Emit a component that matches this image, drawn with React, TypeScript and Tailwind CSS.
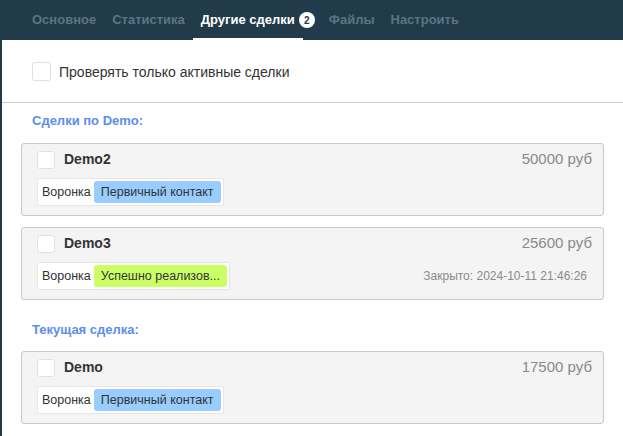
const tabs = ['Основное', 'Статистика', 'Другие сделки', 'Файлы', 'Настроить'];

type Deal = {
  name: string;
  price: string;
  stage: string;
  stageClass: string;
  closed?: string;
};

const otherDeals: Deal[] = [
  { name: 'Demo2', price: '50000 руб', stage: 'Первичный контакт', stageClass: 'bg-[#99ccff]' },
  {
    name: 'Demo3',
    price: '25600 руб',
    stage: 'Успешно реализов...',
    stageClass: 'bg-[#ccff66]',
    closed: 'Закрыто: 2024-10-11 21:46:26',
  },
];

const currentDeal: Deal = { name: 'Demo', price: '17500 руб', stage: 'Первичный контакт', stageClass: 'bg-[#99ccff]' };

function Checkbox() {
  return <span className="block h-[18px] w-[18px] shrink-0 rounded-[3px] border border-[#e2e2e2] bg-white" />;
}

function DealCard({ deal }: { deal: Deal }) {
  return (
    <div className="h-[73px] rounded-[3px] border border-[#c9c9c9] bg-[#f4f4f4] pl-[15px] pr-[10px] pt-[6px]">
      <div className="flex h-[19px] items-center">
        <Checkbox />
        <span className="ml-[9px] text-[14px] font-bold text-[#333]">{deal.name}</span>
        <span className="ml-auto pr-[1px] text-[15px] text-[#8a8a8a]">{deal.price}</span>
      </div>
      <div className="mt-[9px] flex items-center">
        <div className="flex h-[28px] items-center rounded-[2px] border border-[#e6e6e6] bg-white p-[2px] pl-[4px]">
          <span className="text-[12.5px] text-[#333]">Воронка</span>
          <span className={`ml-[3px] flex h-[22px] items-center rounded-[3px] px-[7px] text-[12.5px] text-[#333] ${deal.stageClass}`}>
            {deal.stage}
          </span>
        </div>
        {deal.closed && <span className="ml-auto pr-[6px] text-[12px] text-[#8a8a8a]">{deal.closed}</span>}
      </div>
    </div>
  );
}

export default function App() {
  return (
    <div
      className="h-[436px] w-[623px] overflow-hidden border-l-2 border-[#223b4a] bg-white"
      style={{ fontFamily: '"Liberation Sans", Arial, sans-serif' }}
    >
      <div className="flex h-[40px] items-stretch bg-[#223b4a] pl-[22px]">
        {tabs.map((t) => {
          const active = t === 'Другие сделки';
          return (
            <div key={t} className="flex items-center">
              <div
                className={`flex h-full items-center border-b-2 px-[8px] pt-[1px] text-[13px] font-bold ${
                  active ? 'border-white text-white' : 'border-transparent text-[#5b7585]'
                }`}
              >
                {t}
              </div>
              {active && (
                <span className="ml-[-4px] mr-[6px] flex h-[16px] w-[16px] items-center justify-center rounded-full bg-white text-[10px] font-bold text-[#223b4a]">
                  2
                </span>
              )}
            </div>
          );
        })}
      </div>

      <div className="flex h-[63px] items-center border-b border-[#cfcfcf] pl-[30px]">
        <span className="block h-[19px] w-[19px] rounded-[3px] border border-[#e0e0e0] bg-white" />
        <span className="ml-[8px] pt-[2px] text-[14px] text-[#333]">Проверять только активные сделки</span>
      </div>

      <div className="px-[19px]">
        <div className="flex h-[40px] items-center pb-[5px] pl-[11px] text-[13px] font-bold text-[#5b8ef0]">Сделки по Demo:</div>
        <div className="flex flex-col gap-[11px]">
          {otherDeals.map((d) => (
            <DealCard key={d.name} deal={d} />
          ))}
        </div>
        <div className="flex h-[51px] items-center pl-[11px] pt-[8px] text-[13px] font-bold text-[#5b8ef0]">Текущая сделка:</div>
        <DealCard deal={currentDeal} />
      </div>
    </div>
  );
}
